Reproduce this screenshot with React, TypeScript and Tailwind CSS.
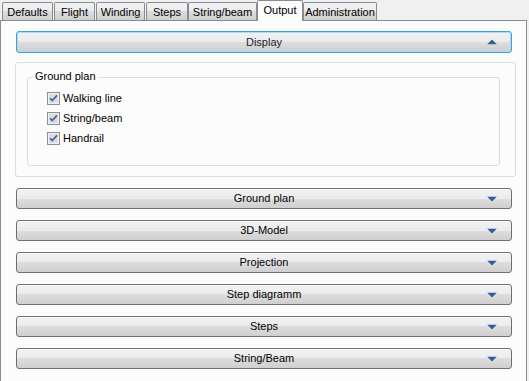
import React from "react";

const TABS = [
  { label: "Defaults", w: "w-[51px]", ml: "ml-[2px]" },
  { label: "Flight", w: "w-[41px]", ml: "ml-[1px]" },
  { label: "Winding", w: "w-[49px]", ml: "ml-[1px]" },
  { label: "Steps", w: "w-[42px]", ml: "ml-[1px]" },
  { label: "String/beam", w: "w-[69px]", ml: "ml-0" },
  { label: "Output", w: "w-[46px]", ml: "ml-0", active: true },
  { label: "Administration", w: "w-[74px]", ml: "ml-0" },
];

const SECTIONS = ["Ground plan", "3D-Model", "Projection", "Step diagramm", "Steps", "String/Beam"];

const CHECKS = ["Walking line", "String/beam", "Handrail"];

const font = "font-['Liberation_Sans',Arial,sans-serif] text-[11px] leading-none";

export default function App() {
  return (
    <div className={`w-[529px] h-[381px] bg-[#f0f0f0] overflow-hidden text-black ${font}`}>
      {/* Tabs */}
      <div className="flex items-end h-[20px]">
        {TABS.map((t) =>
          t.active ? (
            <div
              key={t.label}
              className={`${t.w} ${t.ml} h-[21px] -mb-px relative z-10 bg-[#fcfcfc] border border-b-0 border-[#898c95] rounded-t-[2px] flex items-center justify-center pb-[2px]`}
            >
              {t.label}
            </div>
          ) : (
            <div
              key={t.label}
              className={`${t.w} ${t.ml} h-[18px] border border-b-0 border-[#898c95] rounded-t-[2px] bg-[linear-gradient(to_bottom,#f2f2f2_0%,#ebebeb_50%,#dddddd_50%,#cfcfcf_100%)] flex items-center justify-center pt-px`}
            >
              {t.label}
            </div>
          )
        )}
      </div>

      {/* Page */}
      <div className="w-[527px] h-[361px] bg-[#fcfcfc] border border-b-0 border-[#898c95] pt-[10px] pl-[14px]">
        <SectionButton label="Display" open />

        {/* Expanded content */}
        <div className="mt-[9px] w-[501px] h-[115px] border border-[#d5dfe5] rounded-[3px] pt-[14px] pl-[11px]">
          <div className="relative w-[473px] h-[89px] border border-[#d5dfe5] rounded-[3px] pt-[14px] pl-[19px]">
            <span className="absolute -top-[7px] left-[5px] bg-[#fcfcfc] px-[2px]">Ground plan</span>
            <div className="flex flex-col gap-[7px]">
              {CHECKS.map((c) => (
                <label key={c} className="flex items-center gap-[3px] h-[13px]">
                  <CheckBox />
                  <span>{c}</span>
                </label>
              ))}
            </div>
          </div>
        </div>

        <div className="flex flex-col gap-[11px] mt-[11px]">
          {SECTIONS.map((s) => (
            <SectionButton key={s} label={s} />
          ))}
        </div>
      </div>
    </div>
  );
}

function SectionButton({ label, open }: { label: string; open?: boolean }) {
  return (
    <div
      className={`relative ml-px w-[496px] flex items-center justify-center rounded-[3px] border bg-[linear-gradient(to_bottom,#f2f2f2_0%,#ebebeb_50%,#dddddd_50%,#cfcfcf_100%)] ${
        open
          ? "h-[22px] border-[#3c9fd6] shadow-[inset_0_0_0_1px_#a9dcf5] text-[#1a1a2e]"
          : "h-[21px] border-[#707070] shadow-[inset_0_1px_0_#fbfbfb]"
      }`}
    >
      <span>{label}</span>
      <svg
        className="absolute right-[14px] top-1/2 -translate-y-1/2"
        width="10"
        height="5"
        viewBox="0 0 10 5"
      >
        {open ? <path d="M5 0 L10 5 L0 5 Z" fill="#2f5f95" /> : <path d="M0 0 L10 0 L5 5 Z" fill="#2f5f95" />}
      </svg>
    </div>
  );
}

function CheckBox() {
  return (
    <svg width="13" height="13" viewBox="0 0 13 13" className="shrink-0">
      <rect x="0.5" y="0.5" width="12" height="12" fill="#f4f4f4" stroke="#8f8f8f" />
      <rect x="1.5" y="1.5" width="10" height="10" fill="#dcdcdc" stroke="#f0f0f0" />
      <path d="M3 6.2 L5.2 8.6 L10 3.4" fill="none" stroke="#3f5fa6" strokeWidth="1.6" />
    </svg>
  );
}
